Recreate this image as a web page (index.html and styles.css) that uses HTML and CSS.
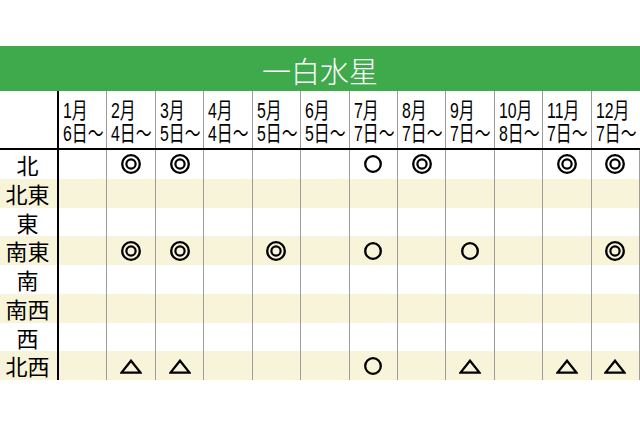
FILE: index.html
```html
<!DOCTYPE html>
<html lang="ja">
<head>
<meta charset="utf-8">
<link rel="stylesheet" href="styles.css">
</head>
<body>
<svg width="0" height="0" class="defs">
  <defs>
    <g id="dbl"><circle cx="10" cy="10" r="8.8" fill="none" stroke="#000" stroke-width="2.3"/><circle cx="10" cy="10" r="4.6" fill="none" stroke="#000" stroke-width="2.2"/></g>
    <g id="cir"><circle cx="9" cy="9" r="7.8" fill="none" stroke="#000" stroke-width="2.3"/></g>
    <g id="tri"><polygon points="11,1.7 20.5,13.6 1.5,13.6" fill="none" stroke="#000" stroke-width="2.3"/></g>
  </defs>
</svg>
<div class="page">
  <div class="title">一白水星</div>
  <div class="grid head">
    <div class="corner"></div>
    <div class="hc"><span>1月<br>6日〜</span></div>
    <div class="hc"><span>2月<br>4日〜</span></div>
    <div class="hc"><span>3月<br>5日〜</span></div>
    <div class="hc"><span>4月<br>4日〜</span></div>
    <div class="hc"><span>5月<br>5日〜</span></div>
    <div class="hc"><span>6月<br>5日〜</span></div>
    <div class="hc"><span>7月<br>7日〜</span></div>
    <div class="hc"><span>8月<br>7日〜</span></div>
    <div class="hc"><span>9月<br>7日〜</span></div>
    <div class="hc"><span>10月<br>8日〜</span></div>
    <div class="hc"><span>11月<br>7日〜</span></div>
    <div class="hc last"><span>12月<br>7日〜</span></div>
  </div>

  <div class="grid row">
    <div class="dir">北</div>
    <div class="c"></div>
    <div class="c"><svg class="s20" viewBox="0 0 20 20"><use href="#dbl"/></svg></div>
    <div class="c"><svg class="s20" viewBox="0 0 20 20"><use href="#dbl"/></svg></div>
    <div class="c"></div>
    <div class="c"></div>
    <div class="c"></div>
    <div class="c"><svg class="s18" viewBox="0 0 18 18"><use href="#cir"/></svg></div>
    <div class="c"><svg class="s20" viewBox="0 0 20 20"><use href="#dbl"/></svg></div>
    <div class="c"></div>
    <div class="c"></div>
    <div class="c"><svg class="s20" viewBox="0 0 20 20"><use href="#dbl"/></svg></div>
    <div class="c last"><svg class="s20" viewBox="0 0 20 20"><use href="#dbl"/></svg></div>
  </div>

  <div class="grid row alt">
    <div class="dir">北東</div>
    <div class="c"></div><div class="c"></div><div class="c"></div><div class="c"></div>
    <div class="c"></div><div class="c"></div><div class="c"></div><div class="c"></div>
    <div class="c"></div><div class="c"></div><div class="c"></div><div class="c last"></div>
  </div>

  <div class="grid row">
    <div class="dir">東</div>
    <div class="c"></div><div class="c"></div><div class="c"></div><div class="c"></div>
    <div class="c"></div><div class="c"></div><div class="c"></div><div class="c"></div>
    <div class="c"></div><div class="c"></div><div class="c"></div><div class="c last"></div>
  </div>

  <div class="grid row alt">
    <div class="dir">南東</div>
    <div class="c"></div>
    <div class="c"><svg class="s20" viewBox="0 0 20 20"><use href="#dbl"/></svg></div>
    <div class="c"><svg class="s20" viewBox="0 0 20 20"><use href="#dbl"/></svg></div>
    <div class="c"></div>
    <div class="c"><svg class="s20" viewBox="0 0 20 20"><use href="#dbl"/></svg></div>
    <div class="c"></div>
    <div class="c"><svg class="s18" viewBox="0 0 18 18"><use href="#cir"/></svg></div>
    <div class="c"></div>
    <div class="c"><svg class="s18" viewBox="0 0 18 18"><use href="#cir"/></svg></div>
    <div class="c"></div>
    <div class="c"></div>
    <div class="c last"><svg class="s20" viewBox="0 0 20 20"><use href="#dbl"/></svg></div>
  </div>

  <div class="grid row">
    <div class="dir">南</div>
    <div class="c"></div><div class="c"></div><div class="c"></div><div class="c"></div>
    <div class="c"></div><div class="c"></div><div class="c"></div><div class="c"></div>
    <div class="c"></div><div class="c"></div><div class="c"></div><div class="c last"></div>
  </div>

  <div class="grid row alt">
    <div class="dir">南西</div>
    <div class="c"></div><div class="c"></div><div class="c"></div><div class="c"></div>
    <div class="c"></div><div class="c"></div><div class="c"></div><div class="c"></div>
    <div class="c"></div><div class="c"></div><div class="c"></div><div class="c last"></div>
  </div>

  <div class="grid row">
    <div class="dir">西</div>
    <div class="c"></div><div class="c"></div><div class="c"></div><div class="c"></div>
    <div class="c"></div><div class="c"></div><div class="c"></div><div class="c"></div>
    <div class="c"></div><div class="c"></div><div class="c"></div><div class="c last"></div>
  </div>

  <div class="grid row alt">
    <div class="dir">北西</div>
    <div class="c"></div>
    <div class="c"><svg class="tri" viewBox="0 0 22 15"><use href="#tri"/></svg></div>
    <div class="c"><svg class="tri" viewBox="0 0 22 15"><use href="#tri"/></svg></div>
    <div class="c"></div>
    <div class="c"></div>
    <div class="c"></div>
    <div class="c"><svg class="s18" viewBox="0 0 18 18"><use href="#cir"/></svg></div>
    <div class="c"></div>
    <div class="c"><svg class="tri" viewBox="0 0 22 15"><use href="#tri"/></svg></div>
    <div class="c"></div>
    <div class="c"><svg class="tri" viewBox="0 0 22 15"><use href="#tri"/></svg></div>
    <div class="c last"><svg class="tri" viewBox="0 0 22 15"><use href="#tri"/></svg></div>
  </div>
</div>
</body>
</html>
```

FILE: styles.css
```css
* { box-sizing: border-box; }
html, body { margin: 0; padding: 0; background: #fff; }
body {
  width: 640px;
  height: 426px;
  overflow: hidden;
  font-family: "Liberation Sans", "Noto Sans CJK JP", sans-serif;
  color: #000;
}
.defs { position: absolute; width: 0; height: 0; }
.page { padding-top: 46px; }
.title {
  height: 45px;
  background: #3eaa4b;
  color: #fff;
  font-family: "Noto Sans CJK JP", sans-serif;
  font-weight: 300;
  font-size: 29px;
  line-height: 42px;
  text-align: center;
  padding-top: 3px;
}
.grid {
  display: grid;
  grid-template-columns: 59px repeat(12, minmax(0, 1fr));
}
.head {
  height: 59px;
  border-bottom: 2px solid #000;
}
.corner { border-right: 2px solid #000; }
.hc {
  min-width: 0;
  border-right: 1px solid #9c9c9c;
  display: flex;
  align-items: center;
  padding-left: 4px;
  padding-top: 4px;
  overflow: hidden;
}
.hc span {
  display: inline-block;
  white-space: nowrap;
  font-size: 22px;
  line-height: 23px;
  transform: scaleX(0.72);
  transform-origin: left center;
}
.last { border-right: none; }
.row { height: 28.75px; }
.row.alt { background: #f8f4d9; }
.dir {
  border-right: 2px solid #000;
  font-family: "Noto Sans CJK JP", sans-serif;
  font-size: 22px;
  line-height: 28.75px;
  text-align: center;
  padding-right: 2px;
}
.c {
  min-width: 0;
  border-right: 1px solid #9c9c9c;
  display: flex;
  align-items: center;
  justify-content: center;
}
.s20 { width: 20px; height: 20px; }
.s18 { width: 18px; height: 18px; }
.tri { width: 22px; height: 15px; margin-top: 1px; }
```
